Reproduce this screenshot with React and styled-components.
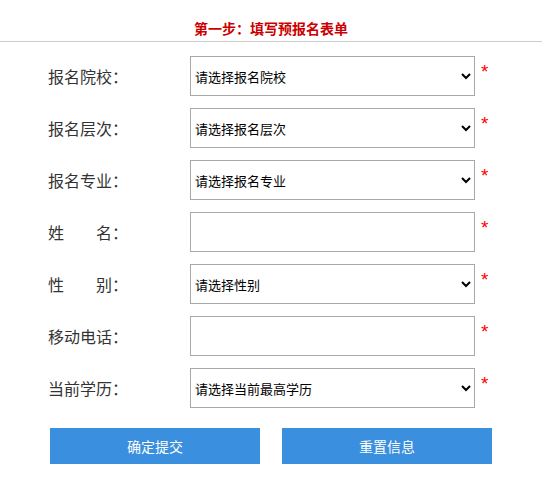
import React from "react";
import styled, { createGlobalStyle } from "styled-components";

const Global = createGlobalStyle`
  html, body { margin: 0; padding: 0; background: #fff; }
  body { font-family: "Microsoft YaHei", "Noto Sans CJK SC", "Noto Sans", sans-serif; }
  * { box-sizing: border-box; }
`;

const Page = styled.div`
  width: 542px;
  min-height: 494px;
  background: #fff;
`;

const Header = styled.div`
  padding: 20px 0 5px;
  border-bottom: 1px solid #cccccc;
  text-align: center;
`;

const Title = styled.h2`
  margin: 0;
  font-size: 14px;
  line-height: 16px;
  font-weight: bold;
  color: #cc0000;
`;

const Form = styled.form`
  padding-top: 14px;
  display: flex;
  flex-direction: column;
  gap: 12px;
`;

const Row = styled.div`
  display: flex;
  align-items: center;
  height: 40px;
  padding-left: 48px;
`;

const Label = styled.label`
  width: 142px;
  font-size: 16px;
  color: #333;
  white-space: pre;
`;

const Select = styled.select`
  width: 285px;
  height: 40px;
  border: 1px solid #a9a9a9;
  border-radius: 0;
  background: #fff;
  font-family: inherit;
  font-size: 13px;
  color: #000;
  padding: 0;
  outline: none;
`;

const Input = styled.input`
  width: 285px;
  height: 40px;
  border: 1px solid #a9a9a9;
  border-radius: 0;
  background: #fff;
  font-family: inherit;
  font-size: 13px;
  padding: 0 5px;
  outline: none;
`;

const Star = styled.span`
  align-self: flex-start;
  margin: 6px 0 0 6px;
  color: #ff0000;
  font-size: 19px;
  line-height: 19px;
  font-family: "Liberation Sans", Arial, sans-serif;
`;

const Buttons = styled.div`
  display: flex;
  gap: 22px;
  padding-left: 50px;
  margin-top: 8px;
`;

const Button = styled.button`
  width: 210px;
  height: 36px;
  border: none;
  border-radius: 0;
  background: #3a8fde;
  color: #fff;
  font-family: inherit;
  font-size: 14px;
  cursor: pointer;
`;

const fields = [
  { label: "报名院校：", type: "select", placeholder: "请选择报名院校" },
  { label: "报名层次：", type: "select", placeholder: "请选择报名层次" },
  { label: "报名专业：", type: "select", placeholder: "请选择报名专业" },
  { label: "姓　　名：", type: "input" },
  { label: "性　　别：", type: "select", placeholder: "请选择性别" },
  { label: "移动电话：", type: "input" },
  { label: "当前学历：", type: "select", placeholder: "请选择当前最高学历" },
];

export default function App() {
  return (
    <Page>
      <Global />
      <Header>
        <Title>第一步：填写预报名表单</Title>
      </Header>
      <Form onSubmit={(e) => e.preventDefault()}>
        {fields.map((f, i) => (
          <Row key={i}>
            <Label>{f.label}</Label>
            {f.type === "select" ? (
              <Select defaultValue="">
                <option value="">{f.placeholder}</option>
              </Select>
            ) : (
              <Input type="text" />
            )}
            <Star>*</Star>
          </Row>
        ))}
        <Buttons>
          <Button type="submit">确定提交</Button>
          <Button type="reset">重置信息</Button>
        </Buttons>
      </Form>
    </Page>
  );
}
